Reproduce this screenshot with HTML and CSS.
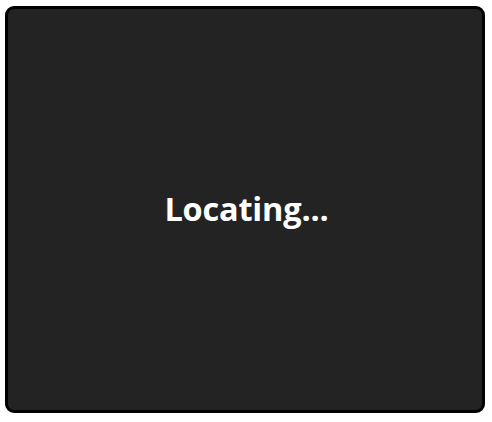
FILE: index.html
```
<!DOCTYPE html>
<html>
<head>
<meta charset="utf-8">
<link rel="stylesheet" href="styles.css">
</head>
<body>
<div class="page">
  <div class="panel">
    <div class="message">Locating...</div>
  </div>
</div>
</body>
</html>
```

FILE: styles.css
```
html, body {
  margin: 0;
  padding: 0;
  background: #ffffff;
}
.page {
  box-sizing: border-box;
  width: 492px;
  height: 422px;
  padding: 6px 7px 9px 5px;
  display: flex;
}
.panel {
  flex: 1;
  box-sizing: border-box;
  border: 3px solid #000000;
  border-radius: 9px;
  background: #232323;
  display: flex;
  align-items: center;
  justify-content: center;
}
.message {
  font-family: "Open Sans", sans-serif;
  font-weight: 700;
  font-size: 32.5px;
  color: #ffffff;
  letter-spacing: -0.2px;
  margin-left: 3px;
  margin-bottom: 3px;
}
```
